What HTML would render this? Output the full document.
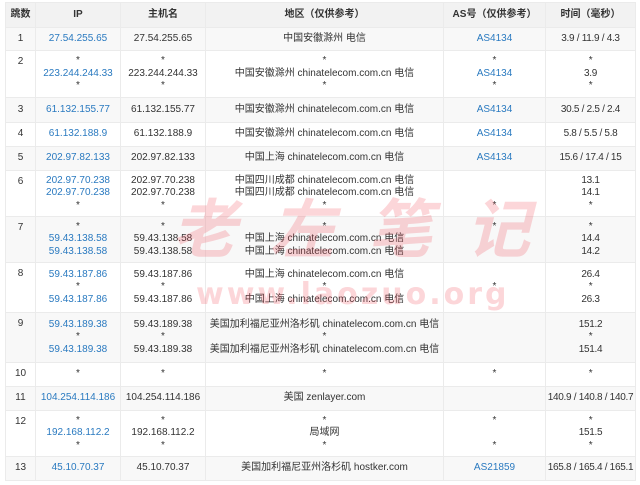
<!DOCTYPE html>
<html><head><meta charset="utf-8"><style>
body{margin:0;background:#fff;width:640px;height:485px;overflow:hidden;position:relative;font-family:"Liberation Sans","Noto Sans CJK SC",sans-serif;font-size:10px;color:#333}
table{position:absolute;left:5px;top:2px;border-collapse:collapse;table-layout:fixed;width:630px}
td,th{border:1px solid #ebebeb;text-align:center;vertical-align:middle;padding:0;line-height:12.5px;white-space:nowrap;overflow:hidden}
th{background:#f2f2f2;font-weight:bold;height:24px;color:#333}
tr:nth-child(even) td{background:#f8f8f8}
td.n{vertical-align:top;padding-top:5px}
td:last-child{letter-spacing:-0.3px}
a{color:#2a7ac0;text-decoration:none}
.wm{position:absolute;color:rgba(240,70,80,0.22);font-weight:bold;white-space:nowrap;pointer-events:none}
</style></head><body>
<table>
<colgroup><col style="width:30px"><col style="width:85px"><col style="width:85px"><col style="width:238px"><col style="width:102px"><col style="width:90px"></colgroup>
<tr><th>跳数</th><th>IP</th><th>主机名</th><th>地区（仅供参考）</th><th>AS号（仅供参考）</th><th>时间（毫秒）</th></tr>
<tr style="height:23px"><td>1</td><td><a>27.54.255.65</a></td><td>27.54.255.65</td><td>中国安徽滁州 电信</td><td><a>AS4134</a></td><td>3.9 / 11.9 / 4.3</td></tr>
<tr style="height:47px"><td class="n">2</td><td>*<br><a>223.244.244.33</a><br>*</td><td>*<br>223.244.244.33<br>*</td><td>*<br>中国安徽滁州 chinatelecom.com.cn 电信<br>*</td><td>*<br><a>AS4134</a><br>*</td><td>*<br>3.9<br>*</td></tr>
<tr style="height:25px"><td>3</td><td><a>61.132.155.77</a></td><td>61.132.155.77</td><td>中国安徽滁州 chinatelecom.com.cn 电信</td><td><a>AS4134</a></td><td>30.5 / 2.5 / 2.4</td></tr>
<tr style="height:24px"><td>4</td><td><a>61.132.188.9</a></td><td>61.132.188.9</td><td>中国安徽滁州 chinatelecom.com.cn 电信</td><td><a>AS4134</a></td><td>5.8 / 5.5 / 5.8</td></tr>
<tr style="height:24px"><td>5</td><td><a>202.97.82.133</a></td><td>202.97.82.133</td><td>中国上海 chinatelecom.com.cn 电信</td><td><a>AS4134</a></td><td>15.6 / 17.4 / 15</td></tr>
<tr style="height:46px"><td class="n">6</td><td><a>202.97.70.238</a><br><a>202.97.70.238</a><br>*</td><td>202.97.70.238<br>202.97.70.238<br>*</td><td>中国四川成都 chinatelecom.com.cn 电信<br>中国四川成都 chinatelecom.com.cn 电信<br>*</td><td><br><br>*</td><td>13.1<br>14.1<br>*</td></tr>
<tr style="height:46px"><td class="n">7</td><td>*<br><a>59.43.138.58</a><br><a>59.43.138.58</a></td><td>*<br>59.43.138.58<br>59.43.138.58</td><td>*<br>中国上海 chinatelecom.com.cn 电信<br>中国上海 chinatelecom.com.cn 电信</td><td>*<br><br>&nbsp;</td><td>*<br>14.4<br>14.2</td></tr>
<tr style="height:50px"><td class="n">8</td><td><a>59.43.187.86</a><br>*<br><a>59.43.187.86</a></td><td>59.43.187.86<br>*<br>59.43.187.86</td><td>中国上海 chinatelecom.com.cn 电信<br>*<br>中国上海 chinatelecom.com.cn 电信</td><td>*</td><td>26.4<br>*<br>26.3</td></tr>
<tr style="height:50px"><td class="n">9</td><td><a>59.43.189.38</a><br>*<br><a>59.43.189.38</a></td><td>59.43.189.38<br>*<br>59.43.189.38</td><td>美国加利福尼亚州洛杉矶 chinatelecom.com.cn 电信<br>*<br>美国加利福尼亚州洛杉矶 chinatelecom.com.cn 电信</td><td></td><td>151.2<br>*<br>151.4</td></tr>
<tr style="height:24px"><td>10</td><td>*</td><td>*</td><td>*</td><td>*</td><td>*</td></tr>
<tr style="height:24px"><td>11</td><td><a>104.254.114.186</a></td><td>104.254.114.186</td><td>美国 zenlayer.com</td><td></td><td>140.9 / 140.8 / 140.7</td></tr>
<tr style="height:46px"><td class="n">12</td><td>*<br><a>192.168.112.2</a><br>*</td><td>*<br>192.168.112.2<br>*</td><td>*<br>局域网<br>*</td><td>*<br><br>*</td><td>*<br>151.5<br>*</td></tr>
<tr style="height:24px"><td>13</td><td><a>45.10.70.37</a></td><td>45.10.70.37</td><td>美国加利福尼亚州洛杉矶 hostker.com</td><td><a>AS21859</a></td><td>165.8 / 165.4 / 165.1</td></tr>
</table>
<div class="wm" style="left:172px;top:190px;font-size:64px;letter-spacing:34px;font-style:italic;line-height:80px">老左笔记</div>
<div class="wm" style="left:196px;top:275px;font-size:30px;letter-spacing:3px;line-height:40px;font-family:'DejaVu Sans',sans-serif">www.laozuo.org</div>
</body></html>
